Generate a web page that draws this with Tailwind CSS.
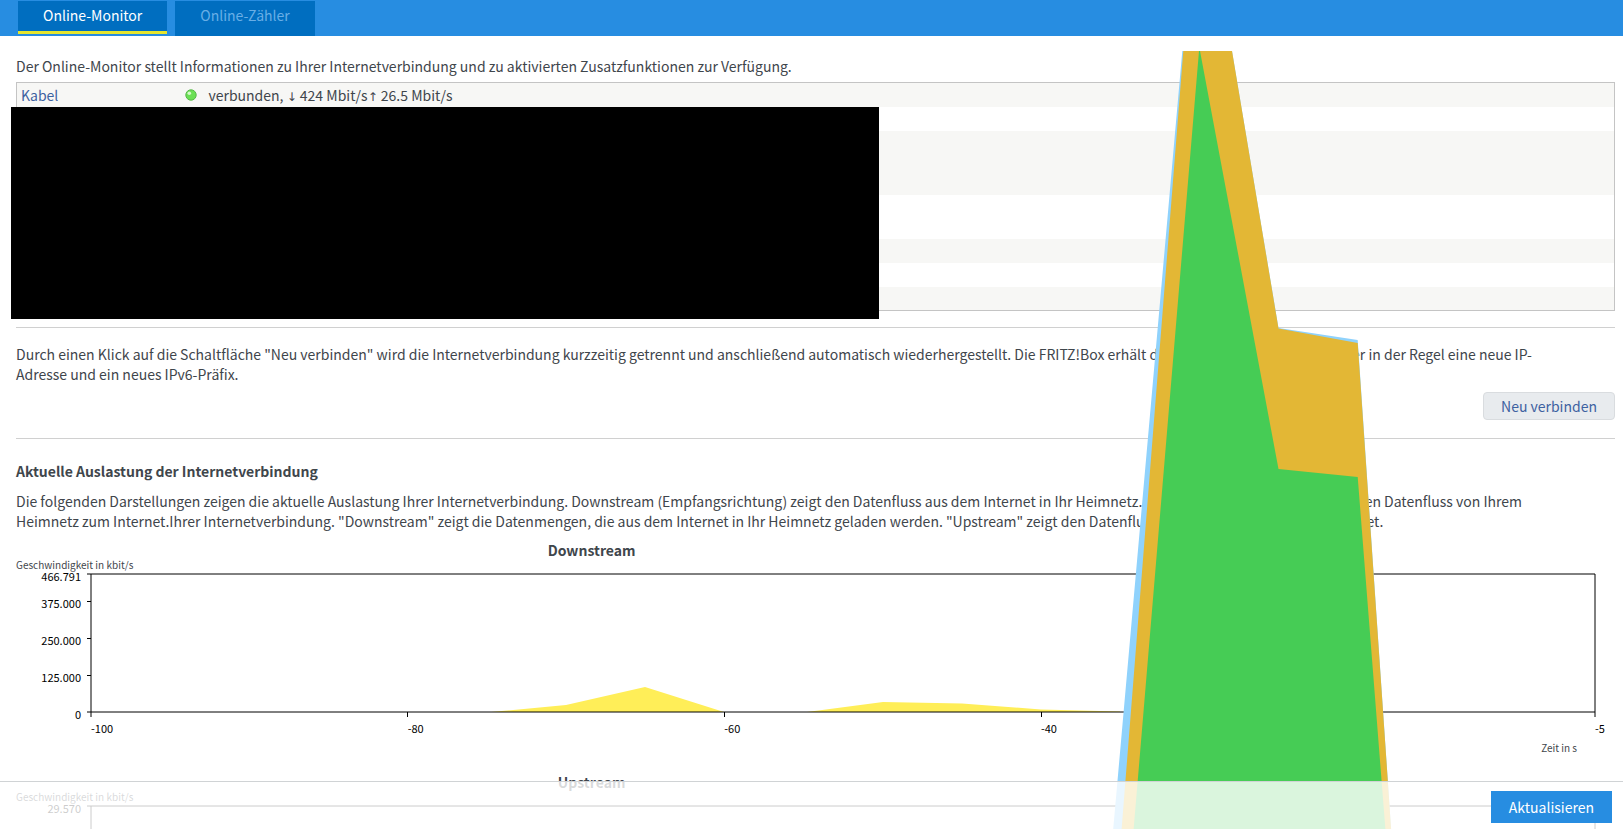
<!DOCTYPE html>
<html lang="de">
<head>
<meta charset="utf-8">
<title>Online-Monitor</title>
<script src="https://cdn.jsdelivr.net/npm/@tailwindcss/browser@4"></script>
</head>
<body class="flex h-screen flex-col overflow-hidden bg-white font-['Noto_Sans_CJK_SC',sans-serif] text-[14px] leading-5 text-[#3f464c]">
<header class="h-9 shrink-0 bg-[#278de1]">
  <nav class="flex gap-2 pt-px pl-[18px]">
    <a href="#monitor" aria-current="page" class="h-[33px] border-b-3 border-[#e6e62e] bg-[#006ec0] px-[25px] pt-1 text-white">Online-Monitor</a>
    <a href="#zaehler" class="h-[35px] bg-[#006ec0] px-[25px] pt-1 text-[#68aee6]">Online-Zähler</a>
  </nav>
</header>
<main class="min-h-0 flex-1 pt-5 pr-2 pl-4">
  <p>Der Online-Monitor stellt Informationen zu Ihrer Internetverbindung und zu aktivierten Zusatzfunktionen zur Verfügung.</p>
  <div class="relative mt-[6px]">
    <table class="w-full border-collapse border border-[#c4c4c4]">
      <tbody>
        <tr class="h-6 bg-[#f7f7f5]">
          <th scope="row" class="w-[168px] py-0 pr-0 pl-1 text-left font-normal"><a href="#kabel" class="text-[#3e62a1]">Kabel</a></th>
          <td class="p-0">
            <div class="flex h-5 items-center gap-3">
              <svg class="size-3" viewBox="0 0 12 12" aria-hidden="true"><circle cx="6" cy="6" r="5.2" fill="#6be055" stroke="#58b84a"/><circle cx="4.3" cy="4.3" r="1.8" fill="#d4fac8"/></svg>
              <span>verbunden, <span class="font-['DejaVu_Sans'] text-[12px] leading-none">↓</span> 424 Mbit/s<span class="font-['DejaVu_Sans'] text-[12px] leading-none">↑</span> 26.5 Mbit/s</span>
            </div>
          </td>
        </tr>
        <tr class="h-6"><td colspan="2"></td></tr>
        <tr class="h-16 bg-[#f7f7f5]"><td colspan="2"></td></tr>
        <tr class="h-11"><td colspan="2"></td></tr>
        <tr class="h-6 bg-[#f7f7f5]"><td colspan="2"></td></tr>
        <tr class="h-6"><td colspan="2"></td></tr>
        <tr class="h-6 bg-[#f7f7f5]"><td colspan="2"></td></tr>
      </tbody>
    </table>
    <div class="absolute top-[25px] -bottom-2 -left-[5px] w-[868px] bg-black"></div>
  </div>
  <hr class="mt-4 border-[#d0d0d0]">
  <p class="mt-4">Durch einen Klick auf die Schaltfläche "Neu verbinden" wird die Internetverbindung kurzzeitig getrennt und anschließend automatisch wiederhergestellt. Die FRITZ!Box erhält dabei von Ihrem Internetanbieter in der Regel eine neue IP-<br>Adresse und ein neues IPv6-Präfix.</p>
  <div class="mt-2 flex justify-end">
    <button type="button" class="h-7 rounded border border-[#d9dcdf] bg-[#e8ebee] px-[17px] leading-6 text-[#3e62a1]">Neu verbinden</button>
  </div>
  <hr class="mt-[18px] border-[#d0d0d0]">
  <h2 class="mt-[22px] font-bold">Aktuelle Auslastung der Internetverbindung</h2>
  <p class="mt-[10px]">Die folgenden Darstellungen zeigen die aktuelle Auslastung Ihrer Internetverbindung. Downstream (Empfangsrichtung) zeigt den Datenfluss aus dem Internet in Ihr Heimnetz. Upstream (Senderichtung) zeigt den Datenfluss von Ihrem<br>Heimnetz zum Internet.Ihrer Internetverbindung. "Downstream" zeigt die Datenmengen, die aus dem Internet in Ihr Heimnetz geladen werden. "Upstream" zeigt den Datenfluss von Ihrem Heimnetz zum Internet.</p>

  <section class="mt-[9px] h-[232px]">
    <h3 class="w-[72%] text-center font-bold">Downstream</h3>
    <p class="-mt-px h-3 text-[10px] leading-3">Geschwindigkeit in kbit/s</p>
    <div class="mt-[3px] flex pr-5">
      <ul class="w-[75px] shrink-0 pr-[10px] text-right text-[11px] leading-1 text-black">
        <li class="h-[27px]">466.791</li><li class="h-[37px]">375.000</li><li class="h-[37px]">250.000</li><li class="h-[37px]">125.000</li><li>0</li>
      </ul>
      <div class="min-w-0 flex-1">
        <svg class="block h-[138px] w-full overflow-visible" viewBox="0 0 1504 138" preserveAspectRatio="none" aria-label="Downstream">
          <path fill="#ffee58" d="M400 138 475 131 554 113 633 138ZM716 138 792 128 871 129.500 950 135.500 1029 137.500V138Z"/>
          <path fill="none" stroke="#000" d="M-4 0H1504V143M0 0V143M-4 138H1504M-4 27.500H0M-4 64.500H0M-4 101.500H0M316.500 138V143M633.500 138V143M950.500 138V143"/>
        </svg>
        <ul class="mt-[10px] grid grid-cols-[20fr_20fr_20fr_20fr_15fr_0fr] text-[11px] leading-3 text-black">
          <li>-100</li><li>-80</li><li>-60</li><li>-40</li><li>-20</li><li class="w-0 whitespace-nowrap">-5</li>
        </ul>
      </div>
    </div>
    <p class="mt-2 pr-[38px] text-right text-[10px] leading-3">Zeit in s</p>
  </section>

  <section>
    <h3 class="w-[72%] text-center font-bold">Upstream</h3>
    <p class="-mt-px h-3 text-[10px] leading-3">Geschwindigkeit in kbit/s</p>
    <div class="mt-[3px] flex pr-5">
      <ul class="w-[75px] shrink-0 pr-[10px] text-right text-[11px] leading-1 text-black">
        <li>29.570</li>
      </ul>
      <svg class="relative block h-[138px] min-w-0 flex-1 overflow-visible" viewBox="0 0 1504 138" preserveAspectRatio="none" aria-label="Upstream">
        <path fill="none" stroke="#000" d="M-4 0H1504V143M0 0V143M-4 138H1504"/>
        <path fill="#8fd2fc" d="M1012 138 1091.300-755H1141L1187.500-478 1266.700-466 1308 138Z"/>
        <path fill="#e3b735" d="M1021.500 138 1092.300-755H1141L1187.500-477.500 1266.700-463 1308 138Z"/>
        <path fill="#46cc55" d="M1033 138 1108-755H1109L1187.500-337 1266.700-329 1303.400 138Z"/>
      </svg>
    </div>
  </section>
</main>
<footer class="fixed inset-x-0 bottom-0 flex h-12 justify-end border-t border-[#d0d3d5] bg-white/80 pt-[9px] pr-[11px]">
  <button type="button" class="h-8 bg-[#278de1] px-[18px] text-white">Aktualisieren</button>
</footer>
</body>
</html>
